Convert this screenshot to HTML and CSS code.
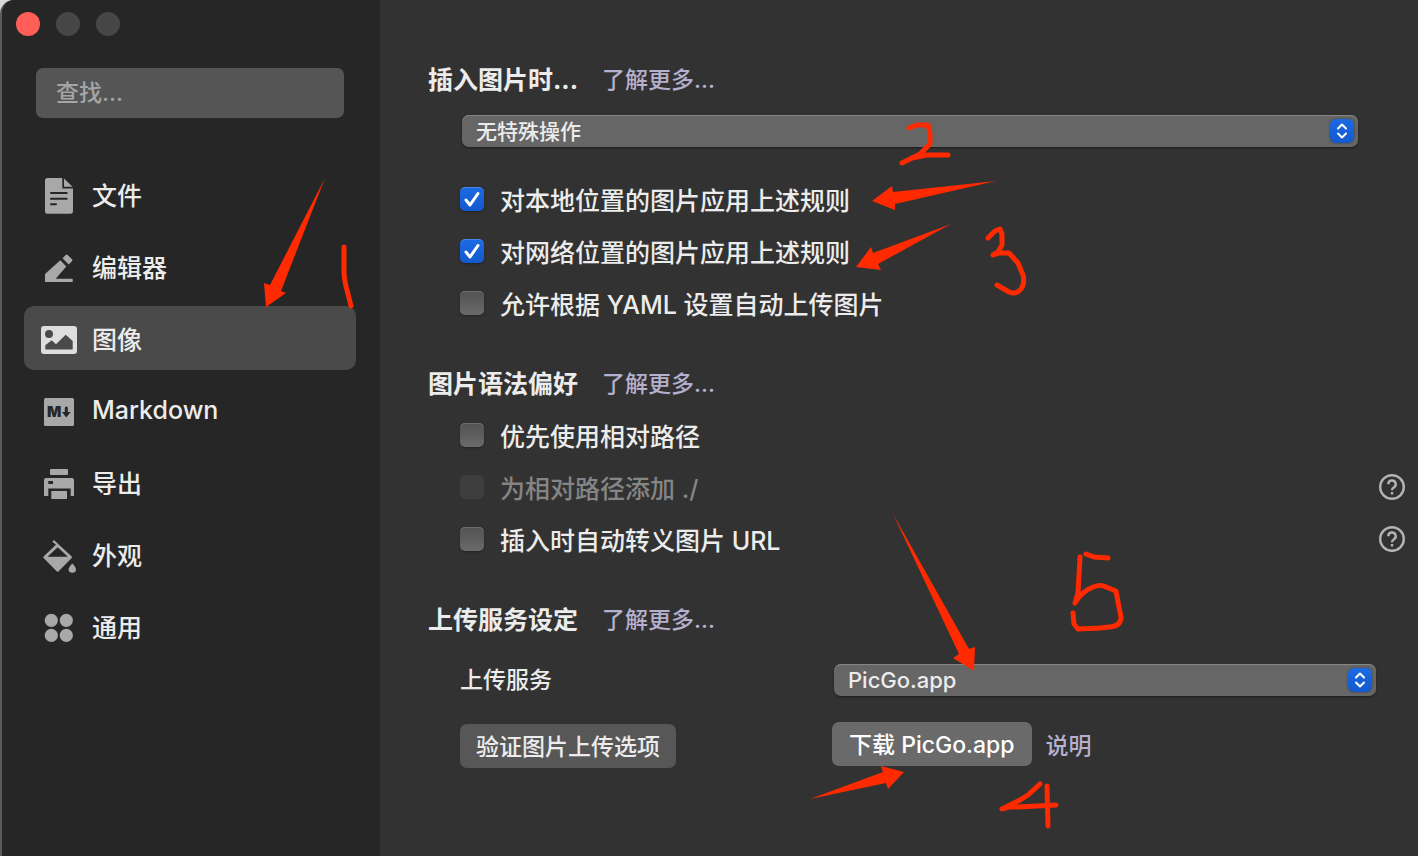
FILE: index.html
```html
<!DOCTYPE html>
<html lang="zh-CN">
<head>
  <meta charset="UTF-8" />
  <meta name="viewport" content="width=device-width, initial-scale=1.0"/>
  <title>偏好设置</title>
  <link rel="stylesheet" href="styles.css">
</head>
<body>
  <div class="window">
    <!-- SIDEBAR -->
    <aside class="sidebar">
      <div class="lights">
        <span class="light close"></span>
        <span class="light"></span>
        <span class="light"></span>
      </div>
      <input class="search" type="search" placeholder="查找..." aria-label="查找"/>
      <nav class="menu">
        <a href="#file">
          <svg class="icon" viewBox="0 0 40 40"><path d="M8.500 4H23.300V14.500H34V37.500Q34 39.700 31.500 39.700H8.500Q6 39.700 6 37.500V6.500Q6 4 8.500 4Z"/><path d="M25 4.500L33.500 12.800H25Z"/><path class="cut" d="M12 19H27.700M12 24.700H27.700M12 30.300H17"/></svg>
          文件
        </a>
        <a href="#editor">
          <svg class="icon" viewBox="0 0 40 40"><path d="M6 28V36H33.700V32.700H16.700L27.300 20.500L21.300 14.300Z"/><path d="M23.500 12.200L26.700 9Q27.700 8 28.700 9L33 13.300Q34 14.300 33 15.300L29.700 18.400Z"/></svg>
          编辑器
        </a>
        <a href="#image" class="active">
          <svg class="icon" viewBox="0 0 40 40"><rect x="2" y="8" width="36" height="28" rx="3"/><circle class="hole" cx="10" cy="16" r="4"/><path class="hole" d="M6.300 27.300L12.700 22.300L17 26.300L26.700 16.700L33.700 23V31.500H6.300Z"/></svg>
          图像
        </a>
        <a href="#markdown">
          <svg class="icon" viewBox="0 0 40 40"><rect x="5" y="8" width="30" height="28" rx="1.500"/><text class="mark" x="8" y="27">M</text><path class="cut thick" d="M27.300 18V23"/><path class="hole" d="M23 22H31.600L27.300 27.500Z"/></svg>
          Markdown
        </a>
        <a href="#export">
          <svg class="icon" viewBox="0 0 40 40"><rect x="11" y="7" width="18" height="6" rx="1"/><path d="M7 16H33Q35 16 35 18V34H31.700V26.500H9.300V34H5V18Q5 16 7 16Z"/><rect class="hole" x="9.300" y="19" width="4.700" height="3"/><rect x="12.300" y="29" width="15.700" height="8"/></svg>
          导出
        </a>
        <a href="#theme">
          <svg class="icon" viewBox="0 0 40 40"><path d="M15 6L20.500 11.200L32.500 22.300Q33.500 23.300 32.500 24.300L19.700 37.200Q18.700 38.200 17.700 37.200L4.800 24.300Q3.800 23.300 4.800 22.300L17 10.800L13.300 7.700Z"/><path class="hole" d="M8.500 22.700L18.700 13.300L28.900 22.700Z"/><path d="M33.300 29.500Q37 33.500 37 35.200A3.700 3.600 0 0 1 29.600 35.200Q29.600 33.500 33.300 29.500Z"/></svg>
          外观
        </a>
        <a href="#general">
          <svg class="icon" viewBox="0 0 40 40"><circle cx="12.300" cy="14.300" r="6.600"/><circle cx="27.300" cy="14.300" r="6.600"/><circle cx="12.300" cy="29.400" r="6.600"/><circle cx="27.300" cy="29.400" r="6.600"/></svg>
          通用
        </a>
      </nav>
    </aside>

    <!-- IMAGE PREFERENCES -->
    <main class="content">
      <section>
        <h2>插入图片时... <a href="#insert-help">了解更多...</a></h2>
        <div class="select-box insert">
          <select aria-label="插入图片时">
            <option selected>无特殊操作</option>
          </select>
          <svg class="stepper" viewBox="0 0 24 24"><path d="M8 9.500L12 5.500L16 9.500M8 14.500L12 18.500L16 14.500"/></svg>
        </div>
        <div class="options">
          <div class="row"><label><input type="checkbox" checked/>对本地位置的图片应用上述规则</label></div>
          <div class="row"><label><input type="checkbox" checked/>对网络位置的图片应用上述规则</label></div>
          <div class="row"><label><input type="checkbox"/>允许根据 YAML 设置自动上传图片</label></div>
        </div>
      </section>

      <section class="syntax">
        <h2>图片语法偏好 <a href="#syntax-help">了解更多...</a></h2>
        <div class="options">
          <div class="row"><label><input type="checkbox"/>优先使用相对路径</label></div>
          <div class="row">
            <label class="disabled"><input type="checkbox" disabled/>为相对路径添加 ./</label>
            <button class="help" aria-label="帮助"><svg viewBox="0 0 28 28"><circle cx="14" cy="14" r="11.800"/><path d="M10.300 11.300A3.700 3.700 0 1 1 15.800 14.400Q14 15.500 14 17.200M14 19V21.400"/></svg></button>
          </div>
          <div class="row">
            <label><input type="checkbox"/>插入时自动转义图片 URL</label>
            <button class="help" aria-label="帮助"><svg viewBox="0 0 28 28"><circle cx="14" cy="14" r="11.800"/><path d="M10.300 11.300A3.700 3.700 0 1 1 15.800 14.400Q14 15.500 14 17.200M14 19V21.400"/></svg></button>
          </div>
        </div>
      </section>

      <section>
        <h2>上传服务设定 <a href="#upload-help">了解更多...</a></h2>
        <div class="upload">
          <label for="service">上传服务</label>
          <div class="select-box">
            <select id="service">
              <option selected>PicGo.app</option>
            </select>
            <svg class="stepper" viewBox="0 0 24 24"><path d="M8 9.500L12 5.500L16 9.500M8 14.500L12 18.500L16 14.500"/></svg>
          </div>
          <div><button class="btn">验证图片上传选项</button></div>
          <div class="download">
            <button class="btn light-btn">下载 PicGo.app</button>
            <a href="#picgo">说明</a>
          </div>
        </div>
      </section>
    </main>

    <!-- Freehand notes over the window -->
    <svg class="notes" viewBox="0 0 1418 856" aria-hidden="true">
      <g class="arrows">
        <path d="M266 307L264 283L270 285L325 178L281 291L286 293Z"/>
        <path d="M872 201L892 186L893 192L996 181L895 204L895 210Z"/>
        <path d="M856 267L871 247L873 253L951 224L878 264L881 270Z"/>
        <path d="M974 671L953 658L959 654L893 514L969 649L975 647Z"/>
        <path d="M904 772L881 766L883 772L810 799L886 783L888 789Z"/>
      </g>
      <g class="strokes">
        <path d="M344 247V273Q345 284 347 290L351 306"/>
        <path d="M909 128L917 125H928L930 133V144L920 154L902 163M912 158L927 155H948"/>
        <path d="M988 238L995 231L1000 229L1002 234V245L998 252L993 255L999 253H1009L1018 263L1023 275Q1025 284 1021 289Q1016 295 1009 292L997 285"/>
        <path d="M1040 784L1028 795L1020 800L1002 809Q1010 806 1018 807L1056 805M1047 786L1048 826"/>
        <path d="M1086 554L1094 557L1108 558M1080 557L1078 593L1075 603Q1081 592 1093 587Q1101 584 1106 587L1116 591L1118 602L1121 617Q1121 626 1110 627L1100 628L1078 629L1074 624L1073 613"/>
      </g>
    </svg>
  </div>
</body>
</html>
```
FILE: styles.css
```css
* { box-sizing: border-box; }
body {
  margin: 0;
  background: #d5d9d8;
  color: #ececec;
  font-family: Inter, "Noto Sans CJK SC", sans-serif;
  font-size: 25px;
  font-weight: 500;
}
input, select, button { font: inherit; color: inherit; }
a { color: #b5b0cd; text-decoration: none; }

.window {
  position: relative;
  display: flex;
  min-height: 100vh;
  overflow: hidden;
  background: #323232;
  border-left: 2px solid #5c5c5c;
  border-top-left-radius: 14px;
}

/* Sidebar */
.sidebar { width: 378px; flex-shrink: 0; padding: 12px 24px 24px 22px; background: #262626; }
.lights { display: flex; gap: 16px; margin-left: -8px; }
.light { width: 24px; height: 24px; border-radius: 50%; background: #464646; }
.light.close { background: #ff5f57; }
.search {
  display: block;
  width: calc(100% - 24px);
  height: 50px;
  margin: 32px 12px 44px;
  padding: 0 20px;
  border: none;
  border-radius: 7px;
  background: #555;
  font-size: 23px;
}
.search::placeholder { color: #a5a5a5; }
.menu { display: flex; flex-direction: column; gap: 8px; }
.menu a {
  display: flex;
  align-items: center;
  gap: 13px;
  height: 64px;
  padding: 0 15px;
  border-radius: 10px;
  color: #ececec;
}
.menu a.active { background: #4a4a4a; }
.icon { width: 40px; height: 40px; fill: #a8a8a8; }
.active .icon { fill: #dedede; }
.icon .cut { fill: none; stroke: #262626; stroke-width: 2px; stroke-linecap: round; }
.icon .thick { stroke-width: 3px; }
.icon .hole { fill: #262626; }
.active .icon .hole { fill: #4a4a4a; }
.icon .mark { fill: #262626; font-size: 15px; font-weight: 900; }

/* Content */
.content { flex: 1; padding: 62px 0 40px 48px; }
section { margin-bottom: 37px; }
h2 {
  display: flex;
  align-items: center;
  gap: 24px;
  height: 32px;
  margin: 0;
  font-size: 25px;
  font-weight: 700;
}
h2 a { font-size: 23px; font-weight: 500; }

.select-box { position: relative; }
.insert { margin: 21px 60px 26px 34px; }
select {
  display: block;
  width: 100%;
  height: 32px;
  padding: 0 40px 0 14px;
  appearance: none;
  border: none;
  border-radius: 7px;
  background: #666;
  box-shadow: inset 0 1px 0 #858585, 0 1px 2px #1c1c1c;
  font-size: 21px;
}
.stepper {
  position: absolute;
  top: 4px;
  right: 4px;
  width: 24px;
  height: 24px;
  border-radius: 6px;
  background: linear-gradient(#1c6ae4, #1259cd);
  box-shadow: 0 0 2px #333;
  fill: none;
  stroke: #fff;
  stroke-width: 2px;
  stroke-linecap: round;
  stroke-linejoin: round;
  pointer-events: none;
}

.options { padding: 0 12px 0 32px; }
.syntax .options { padding-top: 11px; }
.row { display: flex; align-items: center; justify-content: space-between; height: 52px; }
.row label { display: flex; align-items: center; gap: 16px; }
.row label.disabled { color: #858585; }
input[type="checkbox"] {
  width: 24px;
  height: 24px;
  margin: 0;
  appearance: none;
  border-radius: 5px;
  background: linear-gradient(#525252, #6a6a6a);
  box-shadow: inset 0 1px 0 #6e6e6e, 0 1px 2px #222;
}
input[type="checkbox"]:checked {
  background: url("data:image/svg+xml,%3Csvg xmlns='http://www.w3.org/2000/svg' viewBox='0 0 24 24'%3E%3Cpath d='M6 13L10 18L18 6.500' fill='none' stroke='white' stroke-width='3' stroke-linecap='round' stroke-linejoin='round'/%3E%3C/svg%3E"), linear-gradient(#1c6ae4, #1259cd);
  box-shadow: inset 0 1px 0 #4a87e6, 0 1px 2px #222;
}
input[type="checkbox"]:disabled { background: #3e3e3e; box-shadow: none; }
.help { width: 28px; height: 28px; padding: 0; border: none; background: none; }
.help svg { display: block; fill: none; stroke: #b4b4b4; stroke-width: 2.4px; }

.upload {
  display: grid;
  grid-template-columns: 372px 1fr;
  row-gap: 26px;
  margin-top: 30px;
  padding: 0 42px 0 32px;
  font-size: 23px;
}
.upload label { line-height: 32px; }
.upload .select-box { margin-left: 2px; }
.upload select { font-size: 22px; }
.btn {
  height: 44px;
  margin-top: 2px;
  padding: 0 16px 2px;
  border: none;
  border-radius: 7px;
  background: #575757;
}
.light-btn { margin-top: 0; padding: 0 17px 2px; background: #6a6a6a; color: #fff; }
.download { display: flex; align-items: center; gap: 14px; height: 44px; }

/* Notes */
.notes { position: absolute; top: 0; left: -2px; width: 1418px; height: 856px; pointer-events: none; }
.arrows { fill: #ff2a00; }
.strokes { fill: none; stroke: #ff2a00; stroke-width: 5px; stroke-linecap: round; stroke-linejoin: round; }
```
